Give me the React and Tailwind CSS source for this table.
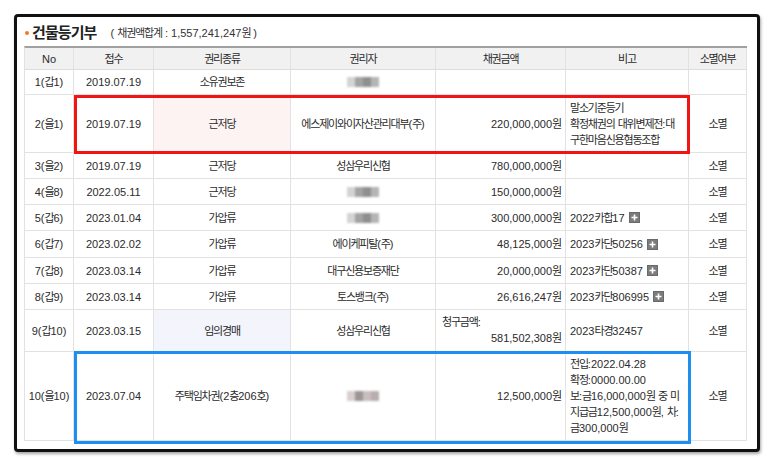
import React from "react";

const HANGUL = /([\uAC00-\uD7A3\u3131-\u318E]+)/;

function H({ t }) {
  const parts = t.split(HANGUL);
  return (
    <>
      {parts.map((p, i) =>
        HANGUL.test(p) ? (
          <span key={i} className="tracking-[-1.2px]">
            {p}
          </span>
        ) : (
          <span key={i}>{p}</span>
        )
      )}
    </>
  );
}

function Blur({ pink }) {
  const cols = pink
    ? ["#d9cfcf", "#9b9596", "#c9bdbd", "#b8aeb0"]
    : ["#d4d4d4", "#a3a3a3", "#8f8f8f", "#b5b5b5"];
  return (
    <span className="inline-flex h-[10px] w-[32px] blur-[1.2px]">
      {cols.map((c, i) => (
        <span key={i} className="h-full flex-1" style={{ backgroundColor: c }} />
      ))}
    </span>
  );
}

function Plus() {
  return (
    <svg width="11" height="11" viewBox="0 0 11 11" className="ml-[4px] inline-block shrink-0">
      <rect x="0" y="0" width="11" height="11" fill="#7c7c7c" />
      <rect x="0.5" y="0.5" width="10" height="10" fill="none" stroke="#6a6a6a" strokeWidth="1" />
      <path d="M5.5 2.5v6M2.5 5.5h6" stroke="#fff" strokeWidth="1.6" />
    </svg>
  );
}

const rows = [
  { no: "1(갑1)", d: "2019.07.19", k: "소유권보존", who: "BLUR", amt: "", note: null, ex: "" },
  {
    no: "2(을1)",
    d: "2019.07.19",
    k: "근저당",
    kbg: "bg-[#fdf3f3]",
    who: "에스제이와이자산관리대부(주)",
    amt: "220,000,000원",
    note: { lines: ["말소기준등기", "확정채권의 대위변제전:대", "구한마음신용협동조합"] },
    ex: "소멸",
  },
  { no: "3(을2)", d: "2019.07.19", k: "근저당", who: "성삼우리신협", amt: "780,000,000원", note: null, ex: "소멸" },
  { no: "4(을8)", d: "2022.05.11", k: "근저당", who: "BLUR", amt: "150,000,000원", note: null, ex: "소멸" },
  { no: "5(갑6)", d: "2023.01.04", k: "가압류", who: "BLUR", amt: "300,000,000원", note: { plus: "2022카합17" }, ex: "소멸" },
  { no: "6(갑7)", d: "2023.02.02", k: "가압류", who: "에이케피탈(주)", amt: "48,125,000원", note: { plus: "2023카단50256" }, ex: "소멸" },
  { no: "7(갑8)", d: "2023.03.14", k: "가압류", who: "대구신용보증재단", amt: "20,000,000원", note: { plus: "2023카단50387" }, ex: "소멸" },
  { no: "8(갑9)", d: "2023.03.14", k: "가압류", who: "토스뱅크(주)", amt: "26,616,247원", note: { plus: "2023카단806995" }, ex: "소멸" },
  {
    no: "9(갑10)",
    d: "2023.03.15",
    k: "임의경매",
    kbg: "bg-[#f4f5fc]",
    who: "성삼우리신협",
    amt: "CLAIM",
    note: { lines: ["2023타경32457"] },
    ex: "소멸",
  },
  {
    no: "10(을10)",
    d: "2023.07.04",
    k: "주택임차권(2층206호)",
    who: "BLURPINK",
    amt: "12,500,000원",
    note: {
      lines: ["전입:2022.04.28", "확정:0000.00.00", "보:금16,000,000원 중 미", "지급금12,500,000원, 차:", "금300,000원"],
    },
    ex: "소멸",
  },
];

const cell = "border-r border-b border-[#e2e2e2] flex items-center overflow-hidden whitespace-nowrap";

export default function App() {
  return (
    <div
      className="w-[773px] h-[467px] bg-white overflow-hidden text-[#2b2b2b] text-[11px] leading-[16px]"
      style={{ fontFamily: '"Liberation Sans", "Noto Sans CJK KR", sans-serif' }}
    >
      <div className="ml-[14px] mt-[14px] w-[746px] h-[438px] border-[3px] border-[#111] rounded-[4px] bg-white shadow-[1px_2px_3px_rgba(0,0,0,0.35)] pl-[7px]">
        <div className="h-[29px] flex items-center pt-[3px]">
          <span className="ml-[1px] w-[4px] h-[4px] rounded-full bg-[#f47920]" />
          <span className="ml-[3px] text-[15px] font-bold text-[#222] tracking-[-0.9px]">건물등기부</span>
          <span className="ml-[14px] text-[11px] text-[#333]">
            <H t="( 채권액합계 : 1,557,241,247원 )" />
          </span>
        </div>

        <div className="relative w-[723px]">
          <div className="grid grid-cols-[49px_80px_137px_145px_130px_123px_58px] grid-rows-[22px_25px_58px_26px_26px_26px_27px_26px_26px_42px_89px] border-t-2 border-t-[#a0a0a0] border-l border-l-[#e2e2e2]">
            {["No", "접수", "권리종류", "권리자", "채권금액", "비고", "소멸여부"].map((h) => (
              <div key={h} className={`${cell} justify-center bg-[#f1f1f1] border-b-[#dcdcdc]`}>
                <H t={h} />
              </div>
            ))}
            {rows.map((r, i) => (
              <React.Fragment key={i}>
                <div className={`${cell} justify-center`}>
                  <H t={r.no} />
                </div>
                <div className={`${cell} justify-center`}>{r.d}</div>
                <div className={`${cell} justify-center ${r.kbg || ""}`}>
                  <H t={r.k} />
                </div>
                <div className={`${cell} justify-center`}>
                  {r.who === "BLUR" ? <Blur /> : r.who === "BLURPINK" ? <Blur pink /> : <H t={r.who} />}
                </div>
                {r.amt === "CLAIM" ? (
                  <div className={`${cell} flex-col justify-center items-stretch px-[4px]`}>
                    <div className="text-left pl-[2px] -mt-[2px]">
                      <H t="청구금액:" />
                    </div>
                    <div className="text-right">
                      <H t="581,502,308원" />
                    </div>
                  </div>
                ) : (
                  <div className={`${cell} justify-end pr-[4px]`}>
                    <H t={r.amt} />
                  </div>
                )}
                <div className={`${cell} justify-start pl-[4px]`}>
                  {r.note && r.note.plus && (
                    <span className="inline-flex items-center">
                      <H t={r.note.plus} />
                      <Plus />
                    </span>
                  )}
                  {r.note && r.note.lines && (
                    <div className="flex flex-col">
                      {r.note.lines.map((l, j) => (
                        <div key={j} className="leading-[16px]">
                          <H t={l} />
                        </div>
                      ))}
                    </div>
                  )}
                </div>
                <div className={`${cell} justify-center`}>
                  <H t={r.ex} />
                </div>
              </React.Fragment>
            ))}
          </div>

          <div className="absolute left-[50px] top-[49px] w-[616px] h-[59px] border-[3px] border-[#f01414] pointer-events-none" />
          <div className="absolute left-[50px] top-[305px] w-[617px] h-[93px] border-[3px] border-[#1f8ef1] pointer-events-none" />
        </div>
      </div>
    </div>
  );
}
